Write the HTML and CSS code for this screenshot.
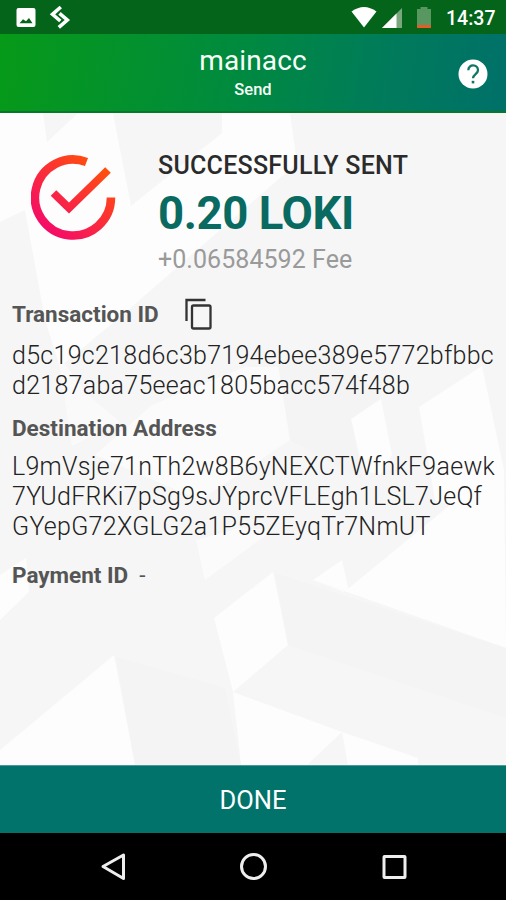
FILE: index.html
```html
<!DOCTYPE html>
<html lang="en">
<head>
<meta charset="utf-8">
<title>Send</title>
<link rel="stylesheet" href="styles.css">
</head>
<body>
<div class="screen">
  <div class="status">
    <svg class="status-left" width="56" height="34" viewBox="0 0 56 34">
      <path fill="#fff" fill-rule="evenodd" d="M3.500 8h15q2 0 2 2v15q0 2-2 2h-15q-2 0-2-2V10q0-2 2-2zM4.500 23.200h13l-3.500-5.200-3 3.200-3-2z"/>
      <g fill="none" stroke="#fff" stroke-width="3.600"><path d="M45.800 7l-8.300 7.300 7.800 6.700"/><path d="M43.800 27.300l8.500-7.300-7.800-6.700"/></g>
    </svg>
    <svg class="status-right" width="84" height="34" viewBox="350 0 84 34">
      <path fill="#fff" d="M351.500 11.500q12.500-9 25 0L364 27.500z"/>
      <path fill="#7aa77d" d="M402 8v20h-20z"/><path fill="#fff" d="M396.500 13.500V28H382z"/>
      <path fill="#58975f" d="M417 9h3.500V7h7v2h3.500v16h-14z"/><path fill="#e85a2a" d="M417 25h14v3h-14z"/>
    </svg>
    <span class="clock">14:37</span>
  </div>
  <header class="header">
    <div class="titles"><h1>mainacc</h1><p>Send</p></div>
    <svg class="help" width="30" height="30" viewBox="0 0 30 30"><circle cx="15" cy="15" r="14.500" fill="#fff"/><path d="M10.300 11.300c0-6.600 9.700-6.400 9.700 0 0 3.600-5 4-5 8" fill="none" stroke="#117565" stroke-width="2.300"/><path d="M13.700 21.800h2.600v2.600h-2.600z" fill="#117565"/></svg>
  </header>
  <main class="content">
    <svg class="pattern" width="506" height="652" viewBox="0 113 506 652">
      <g fill="#fdfdfd">
        <path d="M0 113H43L47 142 78 113H113L131 206 222 133V113H290L297 163 127 311 60 367 45 320 25 210 0 222z"/>
        <path d="M58 355L72 446 120 422 88 395z" opacity=".6"/>
        <path d="M95 455L152 405 245 367H282L290 440 200 500z" opacity=".7"/>
        <path d="M351 419L381 399 392 455 380 475 363 470z"/>
        <path d="M419 407L482 366 504 470 506 648 313 580 344 592 450 505 435 500z"/>
        <path d="M313 580L342 560 349 592z"/>
        <path d="M196 540L205 580 273 530 240 528z" opacity=".7"/>
        <path d="M0 575L26 558 29 592 0 620z"/>
        <path d="M0 750L114 655 135 765H0z"/>
        <path d="M214 618L273 572 288 645 233 692z"/>
        <path d="M233 692L342 732 307 765H241z"/>
        <path d="M342 732L418 758V765H348z"/>
        <path d="M196 765L204 757 206 765z"/>
      </g>
      <path fill="#f4f4f4" d="M116 657L225 688 241 765H135zM275 573L506 648V718L288 645zM278 365L335 350 380 398 351 419 363 480 290 440z"/>
    </svg>
    <section class="summary">
      <svg class="check" width="86" height="86" viewBox="0 0 86 86">
        <defs><linearGradient id="warm" gradientUnits="userSpaceOnUse" x1="15" y1="75" x2="70" y2="12"><stop offset="0" stop-color="#f50b68"/><stop offset="1" stop-color="#ff4e0e"/></linearGradient></defs>
        <path fill="none" stroke="url(#warm)" stroke-width="8.500" d="M55.500 7A38 38 0 1 0 80 42.500"/>
        <path fill="none" stroke="url(#warm)" stroke-width="8" d="M22.500 38L38 53 77 15"/>
      </svg>
      <div class="amounts"><p class="sent">SUCCESSFULLY SENT</p><p class="amount">0.20 LOKI</p><p class="fee">+0.06584592 Fee</p></div>
    </section>
    <div class="label tx">Transaction ID
      <svg class="copy" width="28" height="32" viewBox="0 0 28 32" fill="none" stroke="#333" stroke-width="2.300"><path d="M1.500 23V2H20.500"/><rect x="7" y="7.500" width="18.500" height="23" rx="1.500"/></svg>
    </div>
    <p class="value txid">d5c19c218d6c3b7194ebee389e5772bfbbc<br>d2187aba75eeac1805bacc574f48b</p>
    <div class="label dest">Destination Address</div>
    <p class="value address">L9mVsje71nTh2w8B6yNEXCTWfnkF9aewk<br>7YUdFRKi7pSg9sJYprcVFLEgh1LSL7JeQf<br>GYepG72XGLG2a1P55ZEyqTr7NmUT</p>
    <div class="label pay">Payment ID <span class="dash">-</span></div>
  </main>
  <button class="done">DONE</button>
  <nav class="nav">
    <svg width="506" height="67" viewBox="0 833 506 67" fill="none" stroke="#eee" stroke-width="3"><path stroke-linejoin="round" d="M103 866.500L123.500 855V878.500z"/><circle cx="253.500" cy="866.500" r="12"/><rect x="384" y="856.500" width="21" height="21" rx=".5"/></svg>
  </nav>
</div>
</body>
</html>
```
FILE: styles.css
```css
* { box-sizing: border-box; margin: 0; padding: 0; }
body { font-family: Roboto, sans-serif; background: #000; }
.screen { width: 506px; height: 900px; display: flex; flex-direction: column; overflow: hidden; }
.status { height: 34px; flex: none; background: #04641a; display: flex; align-items: center; padding: 0 11px 0 15px; color: #fff; }
.status-right { margin-left: auto; }
.clock { width: 49px; margin-left: 12px; font-size: 19.500px; font-weight: 500; line-height: 34px; padding-top: 3px; white-space: nowrap; }
.header { height: 79px; flex: none; position: relative; background: linear-gradient(100deg, #069a18 0%, #008b3d 45%, #007b5a 75%, #007069 100%); border-bottom: 2px solid #08772a; text-align: center; color: #f7fff7; }
.header h1 { font-size: 28px; letter-spacing: .1px; font-weight: 400; line-height: 34px; padding-top: 10px; }
.header p { font-size: 16.500px; font-weight: 500; line-height: 20px; margin-top: 2px; }
.help { position: absolute; right: 18px; top: 25px; }
.content { height: 652px; flex: none; position: relative; background: #f6f6f6; padding-left: 12px; }
.pattern { position: absolute; left: 0; top: 0; }
.summary, .label, .value { position: relative; }
.summary { display: flex; height: 171px; }
.check { margin: 42px 0 0 19px; }
.amounts { margin-left: 41px; padding-top: 37px; white-space: nowrap; }
.sent { font-size: 25px; letter-spacing: .25px; line-height: 32px; font-weight: 500; color: #2b2b2b; }
.amount { font-size: 45.500px; letter-spacing: -.4px; line-height: 54px; margin-top: 5px; font-weight: 700; color: #086a61; }
.fee { font-size: 25px; letter-spacing: .05px; line-height: 32px; margin-top: 3px; color: #9a9a9a; }
.label { display: flex; align-items: center; height: 32px; font-size: 22.500px; font-weight: 700; color: #555; white-space: nowrap; }
.tx { margin-top: 14px; }
.copy { margin-left: 26px; }
.value { font-size: 25px; font-weight: 300; letter-spacing: .28px; line-height: 30px; color: #222; white-space: nowrap; }
.txid { margin-top: 11px; }
.dest { margin-top: 11px; }
.address { margin-top: 8px; }
.pay { margin-top: 17px; }
.dash { font-weight: 400; margin-left: 11px; }
.done { height: 68px; flex: none; border: 0; background: #01736a; border-top: 1px solid #4b9a93; color: #fff; font: 400 25.500px Roboto, sans-serif; padding-top: 1px; }
.nav { height: 67px; flex: none; background: #000; }
.nav svg { display: block; }
```
